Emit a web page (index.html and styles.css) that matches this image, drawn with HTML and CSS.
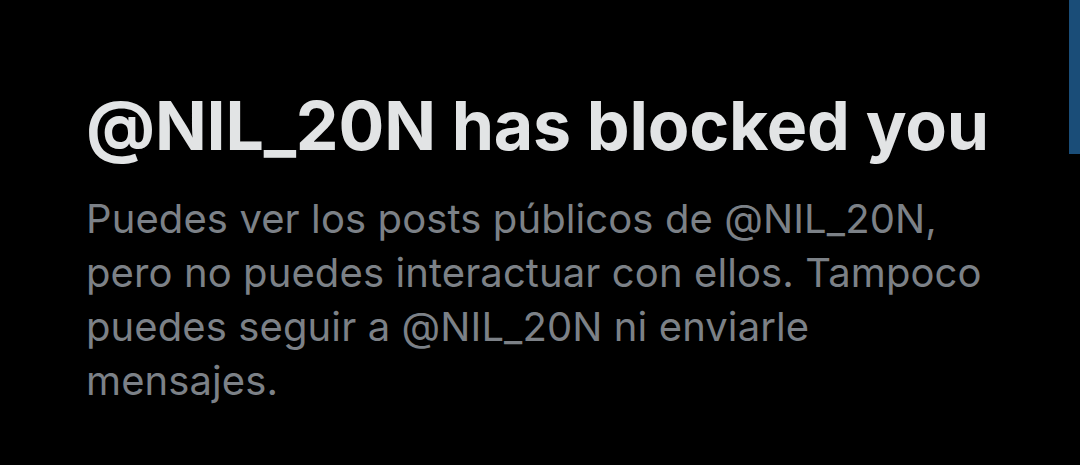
FILE: index.html
```html
<!DOCTYPE html>
<html lang="es">
<head>
    <meta charset="UTF-8">
    <meta name="viewport" content="width=device-width, initial-scale=1.0">
    <title>Blocked</title>
    <link rel="stylesheet" href="styles.css">
</head>
<body>
    <div class="screen">
        <div class="scroll-thumb"></div>
        <div class="blocked">
            <h1 class="blocked-title">@NIL_20N has blocked you</h1>
            <p class="blocked-text">Puedes ver los posts públicos de @NIL_20N, pero no puedes interactuar con ellos. Tampoco puedes seguir a @NIL_20N ni enviarle mensajes.</p>
        </div>
    </div>
</body>
</html>
```

FILE: styles.css
```css
body {
    margin: 0;
    background-color: #000;
    font-family: Inter, 'Noto Sans', sans-serif;
}
.screen {
    position: relative;
    width: 1080px;
    height: 465px;
    overflow: hidden;
}
.scroll-thumb {
    position: absolute;
    top: 0;
    right: 0;
    width: 11px;
    height: 154px;
    background-color: #1a4d78;
}
.blocked {
    padding: 84px 0 0 86px;
    width: 915px;
}
.blocked-title {
    margin: 0;
    font-size: 68px;
    font-weight: 700;
    line-height: 82px;
    color: #e2e4e5;
    letter-spacing: -0.2px;
}
.blocked-text {
    margin: 26px 0 0;
    font-size: 40px;
    font-weight: 400;
    line-height: 54px;
    color: #7c8187;
    letter-spacing: 0.1px;
}
```
